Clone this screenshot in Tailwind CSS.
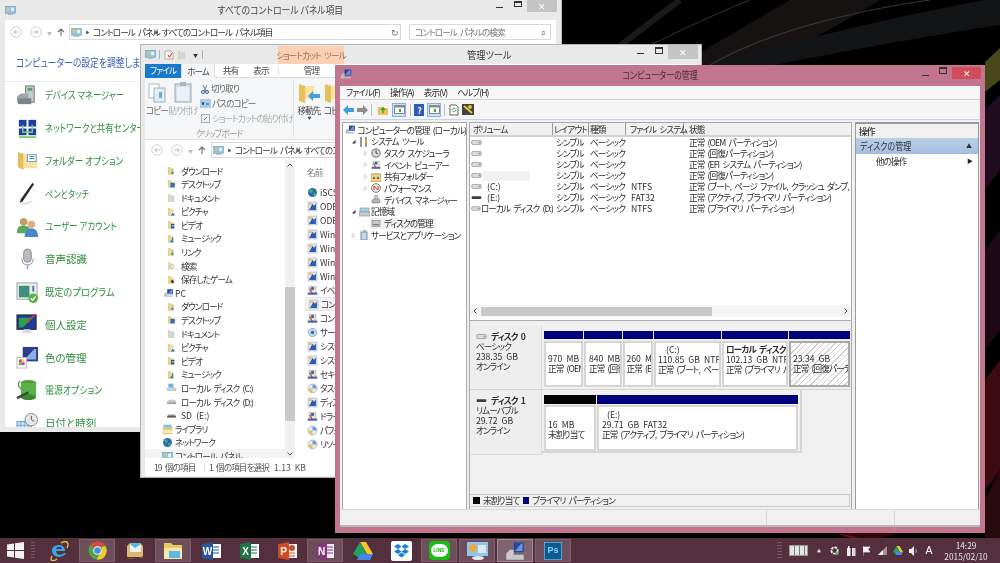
<!DOCTYPE html>
<html lang="ja">
<head>
<meta charset="utf-8">
<script src="https://cdn.jsdelivr.net/npm/@tailwindcss/browser@4"></script>
<title>Windows 8 desktop</title>
</head>
<body class="m-0 overflow-hidden bg-black">
<svg class="absolute w-0 h-0" aria-hidden="true">
  <symbol id="fdown" viewBox="0 0 16 16"><path d="M3 1h3l1 2h5v12H3z" fill="#f1d98a"/><path d="M3 1v14" stroke="#c3a553"/><path d="M10 5v5h3l-3.500 4L6 10h3V5z" fill="#2f8fd8"/></symbol>
  <symbol id="fdesk" viewBox="0 0 16 16"><path d="M3 1h3l1 2h5v12H3z" fill="#f1d98a"/><path d="M3 1v14" stroke="#c3a553"/><rect x="6" y="6" width="8" height="8" fill="#2a6fc0"/></symbol>
  <symbol id="fdoc" viewBox="0 0 16 16"><path d="M3 1h3l1 2h5v12H3z" fill="#e6dcc0"/><path d="M3 1v14" stroke="#b8a878"/><rect x="7" y="4" width="6" height="10" fill="#c9d3e6"/></symbol>
  <symbol id="fpic" viewBox="0 0 16 16"><path d="M3 1h3l1 2h5v12H3z" fill="#f1d98a"/><path d="M3 1v14" stroke="#c3a553"/><rect x="7" y="7" width="7" height="7" fill="#e8f0f8"/><path d="M7 14l3-5 4 5z" fill="#1d6bb8"/></symbol>
  <symbol id="fvid" viewBox="0 0 16 16"><path d="M3 1h3l1 2h5v12H3z" fill="#f1d98a"/><path d="M3 1v14" stroke="#c3a553"/><rect x="7" y="6" width="6" height="8" fill="#27508a"/><rect x="8" y="8" width="4" height="3" fill="#8fb4dd"/></symbol>
  <symbol id="fmus" viewBox="0 0 16 16"><path d="M3 1h3l1 2h5v12H3z" fill="#f1d98a"/><path d="M3 1v14" stroke="#c3a553"/><path d="M10 5v7" stroke="#2f8fd8" stroke-width="2"/><circle cx="8.500" cy="12" r="2.500" fill="#2f8fd8"/></symbol>
  <symbol id="fgame" viewBox="0 0 16 16"><path d="M3 1h3l1 2h5v12H3z" fill="#f1d98a"/><path d="M3 1v14" stroke="#c3a553"/><path d="M6 11l3-4 4 4-3 3z" fill="#3a3a3a"/></symbol>
  <symbol id="fsearch" viewBox="0 0 16 16"><path d="M3 1h3l1 2h5v12H3z" fill="#f1e3b2"/><path d="M3 1v14" stroke="#c3a553"/><circle cx="9" cy="9" r="3" fill="#fff" stroke="#9a9a9a"/></symbol>
  <symbol id="hdd" viewBox="0 0 16 16"><path d="M1 8l3-3h9l2 3v3H1z" fill="#cfd2d4" stroke="#8a8d90" stroke-width=".6"/><rect x="1.500" y="8.500" width="13" height="2.500" fill="#9ea3a6"/><rect x="11.500" y="9" width="2" height="1.200" fill="#58b848"/></symbol>
  <symbol id="hddc" viewBox="0 0 16 16"><path d="M3 1h8v6H3z" fill="#64b5e8"/><path d="M1 9l3-2h9l2 2v3H1z" fill="#cfd2d4" stroke="#8a8d90" stroke-width=".6"/></symbol>
  <symbol id="sd" viewBox="0 0 16 16"><path d="M1 9l3-2h9l2 2v2H1z" fill="#8f9294"/><rect x="1" y="10" width="14" height="2" fill="#3f4244"/></symbol>
  <symbol id="hddvol" viewBox="0 0 16 10"><rect x="1" y="2" width="14" height="6" rx="2" fill="#d8dadb" stroke="#75797c" stroke-width=".8"/><rect x="11" y="4" width="2.500" height="2" fill="#6ab84e"/></symbol>
  <symbol id="pc" viewBox="0 0 16 16"><rect x="6" y="2" width="9" height="8" fill="#24479f"/><path d="M7 9l5-6h2v6z" fill="#6f93d8"/><path d="M1 10l3-3h2v5h9l-1 2H1z" fill="#b8bbbf"/></symbol>
  <symbol id="lib" viewBox="0 0 16 16"><rect x="1" y="4" width="14" height="11" fill="#e7cd78"/><rect x="2" y="1" width="12" height="4" fill="#7bc6e8"/><rect x="1" y="9" width="14" height="4" fill="#f9ecb9"/></symbol>
  <symbol id="net" viewBox="0 0 16 16"><circle cx="8" cy="8" r="6.500" fill="#2769b8"/><path d="M4 4c3-2 5 0 4 3S3 9 4 4zM9 9c3-1 5 1 4 3s-4 2-4-3z" fill="#4fae4a"/></symbol>
  <symbol id="cp" viewBox="0 0 16 16"><rect x="1" y="2" width="14" height="10" fill="#8cc4e8" stroke="#5a86aa" stroke-width=".7"/><rect x="3" y="4" width="4" height="4" fill="#f0c24a"/><rect x="9" y="4" width="4" height="5" fill="#e8f3fa"/><path d="M5 12h6l1 2H4z" fill="#a8aeb3"/></symbol>
  <symbol id="tool" viewBox="0 0 16 16"><rect x="1.500" y="1.500" width="13" height="13" fill="#e5e7ea" stroke="#9ea8b4" stroke-width=".8"/><path d="M3 13l5-9 2 3 3-3v9z" fill="#2d5cb0"/><path d="M3 3h4v3H3z" fill="#f0c04c"/></symbol>
  <symbol id="tool2" viewBox="0 0 16 16"><circle cx="8" cy="8" r="6.500" fill="#e8edf3" stroke="#8b96a3" stroke-width=".8"/><path d="M8 8V2a6 6 0 0 1 6 6z" fill="#6f9ad8"/><path d="M8 8H2a6 6 0 0 0 6 6z" fill="#e7c15c"/></symbol>
  <symbol id="tool3" viewBox="0 0 16 16"><rect x="3" y="2" width="10" height="12" fill="#e8e3d6" stroke="#9b958a" stroke-width=".7"/><path d="M6 3h4v4H6z" fill="#2a5ea8"/><path d="M1 11h14v3H1z" fill="#3f6bb0"/><path d="M4 5l4 8" stroke="#c4392d" stroke-width="1.600"/></symbol>
  <symbol id="gear" viewBox="0 0 16 16"><circle cx="8" cy="8" r="6" fill="#c7dbec" stroke="#6b8fae"/><circle cx="8" cy="8" r="2.500" fill="#3c6fb2"/></symbol>
  <symbol id="back" viewBox="0 0 16 16"><circle cx="8" cy="8" r="7" fill="#fff" stroke="#c4c4c4"/><path d="M12 8H5m3-3L5 8l3 3" fill="none" stroke="#bcbcbc" stroke-width="1.300"/></symbol>
  <symbol id="fwd" viewBox="0 0 16 16"><circle cx="8" cy="8" r="7" fill="#fff" stroke="#c4c4c4"/><path d="M4 8h7M8 5l3 3-3 3" fill="none" stroke="#bcbcbc" stroke-width="1.300"/></symbol>
  <symbol id="up" viewBox="0 0 10 10"><path d="M5 9V2M2 5l3-3 3 3" fill="none" stroke="#6d6d6d" stroke-width="1.100"/></symbol>
  <symbol id="tri" viewBox="0 0 6 6"><path d="M1.500 .5L5 3 1.500 5.500z" fill="#444"/></symbol>
  <symbol id="otri" viewBox="0 0 6 6"><path d="M1.500 .5L5 3 1.500 5.500z" fill="#fff" stroke="#a9a9a9" stroke-width=".6"/></symbol>
  <symbol id="dtri" viewBox="0 0 6 6"><path d="M5.500 1L5.500 5.500 1 5.500z" fill="#444"/></symbol>
</svg>

<div class="relative w-[1000px] h-[563px] overflow-hidden bg-black text-[#333] text-[8.6px] tracking-[-0.9px] [word-spacing:2.2px] leading-none [font-family:'Noto_Sans_CJK_JP','Noto_Sans',sans-serif] [font-feature-settings:'palt'] blur-[0.25px]">

  <!-- wallpaper -->
  <svg class="absolute inset-0" width="1000" height="563" viewBox="0 0 1000 563" aria-hidden="true">
    <rect width="1000" height="563" fill="#000"/>
    <path d="M560 130C640 90 720 40 790 0h90C800 50 690 100 610 135z" fill="#161211"/>
    <path d="M700 65C780 45 900 15 985 0h15v25C900 40 800 60 760 68z" fill="#121416"/>
    <path d="M710 65C770 30 860 10 930 0" fill="none" stroke="#303436" stroke-width="1.200"/>
    <path d="M600 70C640 50 700 20 750 0" fill="none" stroke="#343130" stroke-width="1"/>
    <path d="M560 95C600 60 640 30 680 0" fill="none" stroke="#1b1919" stroke-width="6"/>
    <path d="M985 62L1000 48V80L985 92z" fill="#47471a"/>
    <path d="M985 110L1000 95V170L985 190z" fill="#1f0c1f"/>
    <path d="M985 250L1000 230V330L985 350z" fill="#1d0816"/>
    <path d="M985 380L1000 360V470L985 490z" fill="#3c0b12"/>
    <path d="M985 500L1000 470V540H985z" fill="#28090f"/>
    <path d="M835 533L870 538H850z" fill="#5d1010"/>
    <path d="M840 533h60l-20 5h-20z" fill="#300809"/>
  </svg>

  <!-- Control panel window -->
  <section class="absolute left-0 top-0 w-[562px] h-[432px] bg-[#e9e9e9] flex flex-col px-[5px] pb-[5px] border-r border-[#bdbdbd]">
    <header class="relative h-[20px] shrink-0 flex items-center justify-center text-[10px] tracking-normal [word-spacing:0] text-[#444]">
      <svg class="absolute left-0 top-[5px] w-[11px] h-[11px]"><use href="#cp"/></svg>
      <span class="pb-[1px] scale-x-[0.88] whitespace-nowrap">すべてのコントロール パネル項目</span>
      <div class="absolute right-[-1px] top-0 h-[14px] flex items-start">
        <div class="w-[7px] h-px bg-[#333] mt-[7px] mr-[11px]"></div>
        <div class="w-[8px] h-[6px] border border-[#333] border-t-2 mt-[1px] mr-[5px]"></div>
        <div class="w-[30px] h-[12px] bg-[#c4c4c4] text-white flex items-center justify-center text-[9px]">✕</div>
      </div>
    </header>
    <div class="flex-1 bg-white flex flex-col min-h-0 overflow-hidden">
      <div class="h-[24px] shrink-0 flex items-center pl-[5px] pr-[5px]">
        <svg class="w-[12px] h-[12px]"><use href="#back"/></svg>
        <svg class="w-[12px] h-[12px] ml-[8px]"><use href="#fwd"/></svg>
        <span class="ml-[5px] w-[6px] text-[#bbb] text-[5px]">▼</span>
        <svg class="ml-[3px] w-[10px] h-[10px]"><use href="#up"/></svg>
        <div class="ml-[3px] w-[332px] h-[16px] border border-[#d9d9d9] flex items-center pl-[1px]">
          <svg class="w-[11px] h-[11px]"><use href="#cp"/></svg>
          <svg class="ml-[3px] w-[5px] h-[5px]"><use href="#tri"/></svg>
          <span class="ml-[3px] w-[59px] whitespace-nowrap">コントロール パネル</span>
          <svg class="ml-[2px] w-[5px] h-[5px]"><use href="#tri"/></svg>
          <span class="ml-[3px] flex-1 whitespace-nowrap">すべてのコントロール パネル項目</span>
          <span class="mr-[2px] text-[9px] text-[#666]">↻</span>
        </div>
        <div class="ml-[8px] flex-1 h-[16px] border border-[#d9d9d9] flex items-center justify-between px-[5px] text-[#777]">
          <span>コントロール パネルの検索</span>
          <span class="text-[9px]">⌕</span>
        </div>
      </div>
      <div class="h-[26px] pl-[11px] pt-[13px] text-[11px] tracking-normal text-[#3c62b8] whitespace-nowrap shrink-0"><span class="inline-block origin-left scale-x-[0.8]">コンピューターの設定を調整します</span></div>
      <div class="h-[12px] border-b border-[#e6edf5] shrink-0 -mb-[3px]"></div>
      <ul class="flex flex-col text-[10.5px] tracking-normal [word-spacing:0] text-[#2f8f3f] *:h-[32.8px] *:flex *:items-center *:whitespace-nowrap">
        <li><svg class="ml-[11px] mr-[6px] w-[23px] h-[23px]" viewBox="0 0 24 24"><rect x="10" y="2" width="9" height="17" fill="#c6cacc" stroke="#777"/><rect x="12" y="4" width="5" height="3" fill="#4fa56f"/><path d="M1 13l4-3h8v9H1z" fill="#a2a6a9"/><rect x="2" y="15" width="14" height="6" fill="#7e8386"/></svg><span class="inline-block origin-left scale-x-[0.8]">デバイス マネージャー</span></li>
        <li><svg class="ml-[11px] mr-[6px] w-[23px] h-[23px]" viewBox="0 0 24 24"><rect x="3" y="3" width="8" height="7" fill="#1c3ea8"/><rect x="13" y="3" width="8" height="7" fill="#1c3ea8"/><rect x="3" y="12" width="8" height="7" fill="#1c3ea8"/><rect x="13" y="12" width="8" height="7" fill="#1c3ea8"/><path d="M7 8v8h10V8" fill="none" stroke="#7ccf6a" stroke-width="1.500"/><rect x="3" y="20" width="18" height="2" fill="#7ccf6a"/></svg><span class="inline-block origin-left scale-x-[0.8]">ネットワークと共有センター</span></li>
        <li><svg class="ml-[11px] mr-[6px] w-[23px] h-[23px]" viewBox="0 0 24 24"><path d="M2 3l6 2v17l-6-3z" fill="#e4bf5a"/><path d="M8 5h14v15H8z" fill="#f4e2a2"/><rect x="12" y="6" width="9" height="7" fill="#fff" stroke="#7a9cc0"/><path d="M14 8h5M14 10h5" stroke="#3c7fc0"/></svg><span class="inline-block origin-left scale-x-[0.82]">フォルダー オプション</span></li>
        <li><svg class="ml-[11px] mr-[6px] w-[23px] h-[23px]" viewBox="0 0 24 24"><path d="M17 1l2 1-12 18-3 2 1-4z" fill="#2b2b2b"/><path d="M5 23c5 0 8-1 12-3" stroke="#c7c7c7" fill="none"/></svg><span class="inline-block origin-left scale-x-[0.78]">ペンとタッチ</span></li>
        <li><svg class="ml-[11px] mr-[6px] w-[23px] h-[23px]" viewBox="0 0 24 24"><circle cx="8" cy="7" r="4" fill="#c89b6a"/><path d="M1 19c0-7 3-8 7-8s7 2 7 8z" fill="#5aa95a"/><circle cx="16" cy="10" r="4" fill="#d6b086"/><path d="M9 23c0-7 3-9 7-9s7 2 7 9z" fill="#4a86c6"/></svg><span class="inline-block origin-left scale-x-[0.8]">ユーザー アカウント</span></li>
        <li><svg class="ml-[11px] mr-[6px] w-[23px] h-[23px]" viewBox="0 0 24 24"><rect x="8" y="1" width="8" height="14" rx="4" fill="#b8bcc0" stroke="#8b8f93"/><path d="M6 11c0 9 12 9 12 0" fill="none" stroke="#9a9ea2" stroke-width="1.300"/><path d="M12 18v4" stroke="#9a9ea2" stroke-width="1.500"/></svg><span>音声認識</span></li>
        <li><svg class="ml-[11px] mr-[6px] w-[23px] h-[23px]" viewBox="0 0 24 24"><rect x="1" y="2" width="21" height="17" fill="#eceeee" stroke="#a0a0a0"/><rect x="3" y="5" width="11" height="12" fill="#3f8f7d"/><rect x="17" y="5" width="2" height="6" fill="#4878b0"/><circle cx="18" cy="18" r="5" fill="#5bb24a"/><path d="M15.500 18l2 2 3-4" stroke="#fff" fill="none" stroke-width="1.200"/></svg><span class="inline-block origin-left scale-x-[0.88]">既定のプログラム</span></li>
        <li><svg class="ml-[11px] mr-[6px] w-[23px] h-[23px]" viewBox="0 0 24 24"><rect x="1" y="2" width="20" height="15" fill="#1c3d9c" stroke="#222"/><path d="M3 5h15L7 15H3z" fill="#2f9f4a"/><path d="M12 10L20 1" stroke="#e0382f" stroke-width="1.500"/><path d="M8 17h7l2 4H6z" fill="#d9dcde"/></svg><span>個人設定</span></li>
        <li><svg class="ml-[11px] mr-[6px] w-[23px] h-[23px]" viewBox="0 0 24 24"><rect x="7" y="1" width="16" height="15" fill="#2c3c8e"/><path d="M9 14l10-11h2v11z" fill="#8fb0e4"/><rect x="1" y="12" width="10" height="11" fill="#fff" stroke="#bbb"/><rect x="3" y="14" width="3" height="3" fill="#e84040"/><rect x="6" y="14" width="3" height="3" fill="#e8d840"/><rect x="3" y="17" width="3" height="3" fill="#40c040"/><rect x="6" y="17" width="3" height="3" fill="#c040d0"/></svg><span>色の管理</span></li>
        <li><svg class="ml-[11px] mr-[6px] w-[23px] h-[23px]" viewBox="0 0 24 24"><ellipse cx="13" cy="4" rx="8" ry="3" fill="#4b9c3b"/><rect x="5" y="4" width="16" height="15" fill="#59b14a"/><ellipse cx="13" cy="19" rx="8" ry="3" fill="#3f8832"/><path d="M1 20l12-6" stroke="#444" stroke-width="2.500"/><path d="M4 2c-2 3-2 6 1 8" fill="none" stroke="#7d8a4a" stroke-width="1.400"/></svg><span class="inline-block origin-left scale-x-[0.85]">電源オプション</span></li>
        <li><svg class="ml-[11px] mr-[6px] w-[23px] h-[23px]" viewBox="0 0 24 24"><rect x="1" y="10" width="15" height="13" fill="#c5e0f4" stroke="#5f9ac8"/><path d="M1 14h15M1 18h15M5 10v13M9 10v13M13 10v13" stroke="#5f9ac8" stroke-width=".6"/><circle cx="16" cy="8" r="6.500" fill="#e7e7e7" stroke="#8a8a8a"/><path d="M16 4v4l3 2" stroke="#555" fill="none"/></svg><span>日付と時刻</span></li>
      </ul>
    </div>
  </section>

  <!-- Explorer window -->
  <section class="absolute left-[140px] top-[44px] w-[562px] h-[434px] bg-[#e9e9e9] border border-[#b5b5b5] flex flex-col px-[4px] pb-[1px]">
    <header class="relative h-[19px] shrink-0 flex items-center">
      <svg class="w-[11px] h-[11px]"><use href="#cp"/></svg>
      <span class="ml-[3px] w-px h-[9px] bg-[#b0b0b0]"></span>
      <svg class="ml-[4px] w-[10px] h-[10px]" viewBox="0 0 10 10"><path d="M1 1h6l2 2v6H1z" fill="#fff" stroke="#aaa"/><path d="M4 5l1.500 2L8 3" stroke="#e0642b" fill="none" stroke-width="1.300"/></svg>
      <svg class="ml-[3px] w-[10px] h-[10px]"><use href="#fdoc"/></svg>
      <span class="ml-[6px] text-[5px] text-[#333]">▼</span>
      <span class="ml-[5px] w-px h-[9px] bg-[#b0b0b0]"></span>
      <div class="absolute left-[133px] top-[1px] w-[66px] h-[18px] bg-[#fdd0b3] text-[#8c7263] flex items-center justify-center whitespace-nowrap">ショートカット ツール</div>
      <span class="absolute left-[199px] right-0 pr-[63px] flex justify-center text-[10px] tracking-normal text-[#333]"><span class="scale-x-[0.92]">管理ツール</span></span>
      <div class="absolute right-[-1px] top-0 h-[14px] flex items-start">
        <div class="w-[7px] h-px bg-[#333] mt-[8px] mr-[11px]"></div>
        <div class="w-[8px] h-[7px] border border-[#333] border-t-2 mt-[2px] mr-[5px]"></div>
        <div class="w-[30px] h-[14px] bg-[#c4c4c4] text-white flex items-center justify-center text-[9px]">✕</div>
      </div>
    </header>
    <div class="flex-1 bg-white flex flex-col min-h-0 overflow-hidden">
      <nav class="h-[14px] shrink-0 flex items-center border-b border-[#dcdcdc] text-[#444] relative">
        <span class="w-[36px] h-[15px] bg-[#1979ca] text-white flex items-center justify-center">ファイル</span>
        <span class="w-[34px] h-[15px] bg-[#f5f6f7] border-x border-t border-[#dcdcdc] flex items-center justify-center">ホーム</span>
        <span class="w-[31px] text-center">共有</span>
        <span class="w-[30px] text-center">表示</span>
        <span class="ml-[2px] w-[66px] text-center border-l border-[#e0e0e0]">管理</span>
      </nav>
      <div class="h-[62px] shrink-0 bg-[#f5f6f7] border-b border-[#e0e0e0] flex text-[#aaa] relative">
        <div class="w-[148px] flex flex-col">
          <div class="flex-1 flex min-h-0">
            <div class="w-[30px] flex flex-col items-center pt-[5px] text-[#6a6a6a]">
              <svg class="w-[18px] h-[20px]" viewBox="0 0 18 20"><rect x="1" y="1" width="10" height="14" fill="#fff" stroke="#b5b5b5"/><rect x="6" y="5" width="11" height="14" fill="#e4edf6" stroke="#9fb0c2"/><rect x="11" y="9" width="3" height="6" fill="#6fa8dc"/></svg>
              <span class="mt-[3px] whitespace-nowrap">コピー</span>
            </div>
            <div class="w-[28px] flex flex-col items-center pt-[3px]">
              <svg class="w-[18px] h-[22px]" viewBox="0 0 18 22"><rect x="1" y="3" width="16" height="18" fill="#d6e0ea" stroke="#9aa8b8"/><rect x="3" y="6" width="12" height="14" fill="#ebf0f5"/><rect x="6" y="1" width="6" height="4" fill="#aab5c2"/></svg>
              <span class="mt-[3px] whitespace-nowrap">貼り付け</span>
            </div>
            <div class="flex flex-col flex-1 pl-[3px] *:h-[15px] *:flex *:items-center *:whitespace-nowrap mt-[3px]">
              <div class="text-[#666]"><svg class="w-[10px] h-[10px] mr-[1px]" viewBox="0 0 10 10"><path d="M3 1l3 6M7 1L4 7" stroke="#6a7fa8" fill="none"/><circle cx="3" cy="8" r="1.500" fill="none" stroke="#2e5ea8"/><circle cx="7" cy="8" r="1.500" fill="none" stroke="#2e5ea8"/></svg>切り取り</div>
              <div class="text-[#666]"><svg class="w-[11px] h-[9px] mr-[1px]" viewBox="0 0 11 9"><rect width="11" height="9" fill="#a9cdea"/><path d="M2 3l1 3 1-3M6 5h3" stroke="#2b4e80" fill="none"/></svg>パスのコピー</div>
              <div class="text-[#aaa]"><svg class="w-[9px] h-[9px] mr-[2px] ml-[1px]" viewBox="0 0 9 9"><rect x=".5" y=".5" width="8" height="8" fill="#edf0f4" stroke="#a6b1be"/><path d="M3 6l3-3" stroke="#5b7eaa"/></svg>ショートカットの貼り付け</div>
            </div>
          </div>
          <div class="h-[12px] shrink-0 flex items-center justify-center text-[#999]">クリップボード</div>
        </div>
        <div class="w-px bg-[#e0e0e0] my-[2px]"></div>
        <div class="flex text-[#444] pl-[3px] pt-[5px]">
          <div class="flex flex-col items-center w-[24px]">
            <svg class="w-[23px] h-[20px]" viewBox="0 0 23 20"><path d="M1 1l6 2v17l-6-2z" fill="#e4bf5a"/><path d="M7 3h9v13H7z" fill="#f7e39e"/><path d="M22 11h-7V8l-5 5 5 5v-3h7z" fill="#3ea0e2"/></svg>
            <span class="mt-[3px] whitespace-nowrap">移動先</span>
            <span class="text-[4px] mt-[1px]">▼</span>
          </div>
          <div class="flex flex-col items-center w-[24px] ml-[2px]">
            <svg class="w-[23px] h-[20px]" viewBox="0 0 23 20"><path d="M1 1l6 2v17l-6-2z" fill="#e4bf5a"/><path d="M7 3h9v13H7z" fill="#f7e39e"/></svg>
            <span class="mt-[3px] whitespace-nowrap">コピー</span>
          </div>
        </div>
      </div>
      <div class="h-[20px] shrink-0 flex items-center pl-[6px]">
        <svg class="w-[12px] h-[12px]"><use href="#back"/></svg>
        <svg class="w-[12px] h-[12px] ml-[8px]"><use href="#fwd"/></svg>
        <span class="ml-[5px] w-[6px] text-[#bbb] text-[5px]">▼</span>
        <svg class="ml-[3px] w-[10px] h-[10px]"><use href="#up"/></svg>
        <div class="ml-[4px] flex-1 h-[16px] border border-[#d9d9d9] flex items-center pl-[1px] whitespace-nowrap">
          <svg class="w-[11px] h-[11px]"><use href="#cp"/></svg>
          <svg class="ml-[3px] w-[5px] h-[5px]"><use href="#tri"/></svg>
          <span class="ml-[3px] w-[59px]">コントロール パネル</span>
          <svg class="ml-[2px] w-[5px] h-[5px]"><use href="#tri"/></svg>
          <span class="ml-[3px]">すべてのコントロール パネル項目</span>
        </div>
      </div>
      <div class="flex-1 flex min-h-0">
        <div class="w-[140px] shrink-0 relative pt-[4px] overflow-hidden text-[#333] *:h-[13.6px] *:flex *:items-center *:whitespace-nowrap">
          <div class="pl-[22px]"><svg class="w-[9px] h-[10px] mr-[5px]"><use href="#fdown"/></svg>ダウンロード</div>
          <div class="pl-[22px]"><svg class="w-[9px] h-[10px] mr-[5px]"><use href="#fdesk"/></svg>デスクトップ</div>
          <div class="pl-[22px]"><svg class="w-[9px] h-[10px] mr-[5px]"><use href="#fdoc"/></svg>ドキュメント</div>
          <div class="pl-[22px]"><svg class="w-[9px] h-[10px] mr-[5px]"><use href="#fpic"/></svg>ピクチャ</div>
          <div class="pl-[22px]"><svg class="w-[9px] h-[10px] mr-[5px]"><use href="#fvid"/></svg>ビデオ</div>
          <div class="pl-[22px]"><svg class="w-[9px] h-[10px] mr-[5px]"><use href="#fmus"/></svg>ミュージック</div>
          <div class="pl-[22px]"><svg class="w-[9px] h-[10px] mr-[5px]"><use href="#fdown"/></svg>リンク</div>
          <div class="pl-[22px]"><svg class="w-[9px] h-[10px] mr-[5px]"><use href="#fsearch"/></svg>検索</div>
          <div class="pl-[22px]"><svg class="w-[9px] h-[10px] mr-[5px]"><use href="#fgame"/></svg>保存したゲーム</div>
          <div class="pl-[18px] tracking-normal"><svg class="w-[11px] h-[10px] mr-[1px]"><use href="#pc"/></svg>PC</div>
          <div class="pl-[22px]"><svg class="w-[9px] h-[10px] mr-[5px]"><use href="#fdown"/></svg>ダウンロード</div>
          <div class="pl-[22px]"><svg class="w-[9px] h-[10px] mr-[5px]"><use href="#fdesk"/></svg>デスクトップ</div>
          <div class="pl-[22px]"><svg class="w-[9px] h-[10px] mr-[5px]"><use href="#fdoc"/></svg>ドキュメント</div>
          <div class="pl-[22px]"><svg class="w-[9px] h-[10px] mr-[5px]"><use href="#fpic"/></svg>ピクチャ</div>
          <div class="pl-[22px]"><svg class="w-[9px] h-[10px] mr-[5px]"><use href="#fvid"/></svg>ビデオ</div>
          <div class="pl-[22px]"><svg class="w-[9px] h-[10px] mr-[5px]"><use href="#fmus"/></svg>ミュージック</div>
          <div class="pl-[21px]"><svg class="w-[11px] h-[10px] mr-[4px]"><use href="#hddc"/></svg>ローカル ディスク (C:)</div>
          <div class="pl-[21px]"><svg class="w-[11px] h-[10px] mr-[4px]"><use href="#hdd"/></svg>ローカル ディスク (D:)</div>
          <div class="pl-[21px] tracking-normal"><svg class="w-[11px] h-[10px] mr-[4px]"><use href="#sd"/></svg>SD (E:)</div>
          <div class="pl-[17px]"><svg class="w-[11px] h-[11px] mr-[2px]"><use href="#lib"/></svg>ライブラリ</div>
          <div class="pl-[17px]"><svg class="w-[11px] h-[11px] mr-[2px]"><use href="#net"/></svg>ネットワーク</div>
          <div class="pl-[17px] bg-[#f3f3f3]"><svg class="w-[11px] h-[11px] mr-[2px]"><use href="#cp"/></svg>コントロール パネル</div>
        </div>
        <div class="w-[10px] shrink-0 bg-[#f0f0f0] flex flex-col items-center justify-between relative py-[2px]">
          <svg class="w-[6px] h-[4px] mt-[1px]" viewBox="0 0 6 4"><path d="M.5 3.500L3 1l2.500 2.500" fill="none" stroke="#555"/></svg>
          <div class="absolute left-0 right-0 top-[127px] h-[134px] bg-[#c9c9c9]"></div>
          <svg class="w-[6px] h-[4px]" viewBox="0 0 6 4"><path d="M.5.5L3 3 5.500.5" fill="none" stroke="#555"/></svg>
        </div>
        <div class="flex-1 pl-[12px] min-w-0 overflow-hidden">
          <div class="h-[25px] flex items-center text-[#777] pb-[1px]">名前</div>
          <div class="-ml-[2px] *:h-[14px] *:flex *:items-center *:pl-[2px] *:whitespace-nowrap">
            <div class="tracking-normal"><svg class="w-[11px] h-[11px] mr-[2px]"><use href="#net"/></svg>iSCSI</div>
            <div class="tracking-normal"><svg class="w-[11px] h-[11px] mr-[2px]"><use href="#tool"/></svg>ODBC</div>
            <div class="tracking-normal"><svg class="w-[11px] h-[11px] mr-[2px]"><use href="#tool"/></svg>ODBC</div>
            <div class="tracking-normal"><svg class="w-[11px] h-[11px] mr-[2px]"><use href="#tool"/></svg>Windows</div>
            <div class="tracking-normal"><svg class="w-[11px] h-[11px] mr-[2px]"><use href="#tool"/></svg>Windows</div>
            <div class="tracking-normal"><svg class="w-[11px] h-[11px] mr-[2px]"><use href="#tool"/></svg>Windows</div>
            <div class="tracking-normal"><svg class="w-[11px] h-[11px] mr-[2px]"><use href="#tool"/></svg>Windows</div>
            <div><svg class="w-[11px] h-[11px] mr-[2px]"><use href="#tool3"/></svg>イベント</div>
            <div class="bg-[#f4f4f4] border border-[#e3e3e3]"><svg class="w-[11px] h-[11px] mr-[2px]"><use href="#tool"/></svg>コンピューター</div>
            <div><svg class="w-[11px] h-[11px] mr-[2px]"><use href="#tool3"/></svg>コンポーネント</div>
            <div><svg class="w-[11px] h-[11px] mr-[2px]"><use href="#gear"/></svg>サービス</div>
            <div><svg class="w-[11px] h-[11px] mr-[2px]"><use href="#tool"/></svg>システム</div>
            <div><svg class="w-[11px] h-[11px] mr-[2px]"><use href="#tool"/></svg>システム</div>
            <div><svg class="w-[11px] h-[11px] mr-[2px]"><use href="#tool3"/></svg>セキュリティ</div>
            <div><svg class="w-[11px] h-[11px] mr-[2px]"><use href="#tool2"/></svg>タスク</div>
            <div><svg class="w-[11px] h-[11px] mr-[2px]"><use href="#tool"/></svg>ディスク</div>
            <div><svg class="w-[11px] h-[11px] mr-[2px]"><use href="#tool3"/></svg>ドライブ</div>
            <div><svg class="w-[11px] h-[11px] mr-[2px]"><use href="#tool2"/></svg>パフォーマンス</div>
            <div><svg class="w-[11px] h-[11px] mr-[2px]"><use href="#tool2"/></svg>リソース</div>
          </div>
        </div>
      </div>
      <footer class="h-[18px] shrink-0 flex items-center text-[#555] whitespace-nowrap">
        <span class="w-[60px] pl-[9px] border-r border-[#e3e3e3]">19 個の項目</span>
        <span class="pl-[4px] w-[69px]">1 個の項目を選択</span>
        <span class="tracking-normal">1.13 KB</span>
      </footer>
    </div>
  </section>

  <!-- Computer management window -->
  <section class="absolute left-[335px] top-[65px] w-[650px] h-[468px] bg-[#c1758f] flex flex-col px-[5px] pb-[6px] text-[#2b2b2b]">
    <header class="relative h-[21px] shrink-0 flex items-center justify-center text-[10px] tracking-normal text-[#4b2a36]">
      <svg class="absolute left-0 top-[3px] w-[12px] h-[12px]"><use href="#pc"/></svg>
      <span class="pb-[2px] scale-x-[0.8] whitespace-nowrap">コンピューターの管理</span>
      <div class="absolute right-[-1px] top-[2px] h-[14px] flex items-start">
        <div class="w-[7px] h-px bg-[#333] mt-[8px] mr-[10px]"></div>
        <div class="w-[8px] h-[7px] border border-[#333] border-t-2 mr-[5px]"></div>
        <div class="w-[29px] h-[12px] bg-[#d24b5a] text-white flex items-center justify-center text-[9px]">✕</div>
      </div>
    </header>
    <div class="flex-1 bg-[#f0f0f0] flex flex-col min-h-0">
      <div class="h-[14px] shrink-0 bg-[#f7f7f8] border-b border-[#d0d0d0] flex items-center gap-[10px] pl-[6px] whitespace-nowrap">
        <span>ファイル(F)</span><span>操作(A)</span><span>表示(V)</span><span>ヘルプ(H)</span>
      </div>
      <div class="h-[20px] shrink-0 bg-[#f5f5f6] flex items-center pl-[3px] border-b border-[#c3d5e8]">
        <svg class="w-[11px] h-[10px]" viewBox="0 0 11 10"><path d="M0 5l5-5v3h6v4H5v3z" fill="#3e9fe0"/></svg>
        <svg class="ml-[3px] w-[11px] h-[10px]" viewBox="0 0 11 10"><path d="M11 5L6 0v3H0v4h6v3z" fill="#8d8d8d"/></svg>
        <span class="ml-[3px] w-px h-[12px] bg-[#bbb]"></span>
        <svg class="ml-[5px] w-[12px] h-[12px]" viewBox="0 0 12 12"><path d="M1 3h4l1 1h5v7H1z" fill="#e6c35c"/><path d="M6 9V4L4 6M6 4l2 2" stroke="#2b9c36" fill="none" stroke-width="1.200"/></svg>
        <div class="ml-[3px] w-[14px] h-[14px] bg-[#cde4f7] border border-[#7eb4ea] flex items-center justify-center"><svg class="w-[11px] h-[9px]" viewBox="0 0 11 9"><rect x=".5" y=".5" width="10" height="8" fill="#fff" stroke="#888"/><rect x=".5" y=".5" width="10" height="2" fill="#8a8a8a"/><rect x="5" y="4" width="2" height="3" fill="#3fa447"/></svg></div>
        <span class="ml-[4px] w-px h-[12px] bg-[#bbb]"></span>
        <svg class="ml-[3px] w-[10px] h-[12px]" viewBox="0 0 10 12"><rect width="10" height="12" fill="#2d5cc0"/><text x="5" y="9.500" font-size="9" text-anchor="middle" fill="#fff" font-weight="700">?</text></svg>
        <div class="ml-[3px] w-[14px] h-[14px] bg-[#cde4f7] border border-[#7eb4ea] flex items-center justify-center"><svg class="w-[11px] h-[9px]" viewBox="0 0 11 9"><rect x=".5" y=".5" width="10" height="8" fill="#fff" stroke="#888"/><rect x=".5" y=".5" width="10" height="2" fill="#8a8a8a"/><rect x="5" y="4" width="2" height="3" fill="#3fa447"/></svg></div>
        <span class="ml-[3px] w-px h-[12px] bg-[#bbb]"></span>
        <svg class="ml-[4px] w-[10px] h-[12px]" viewBox="0 0 10 12"><path d="M1 1h6l2 2v8H1z" fill="#fff" stroke="#666"/><path d="M3 6a2 2 0 0 1 3.500-1M7 6a2 2 0 0 1-3.500 1" stroke="#2e9c3f" fill="none"/></svg>
        <svg class="ml-[3px] w-[12px] h-[11px]" viewBox="0 0 12 11"><rect width="12" height="11" fill="#444"/><path d="M2 2l8 7" stroke="#e0c83c" stroke-width="2"/><circle cx="8" cy="3" r="2" fill="#d9c43a"/></svg>
      </div>
      <div class="flex-1 flex min-h-0 pt-[2px] pl-[2px]">
        <!-- tree -->
        <div class="w-[125px] shrink-0 bg-white border border-[#a9a9a9] border-b-0 pt-[1px] *:h-[11.7px] *:flex *:items-center *:whitespace-nowrap">
          <div class="pl-[2px]"><svg class="w-[11px] h-[11px] mr-[2px]"><use href="#pc"/></svg>コンピューターの管理 (ローカル)</div>
          <div class="pl-[8px]"><svg class="w-[5px] h-[5px] mr-[3px]"><use href="#dtri"/></svg><svg class="w-[9px] h-[10px] mr-[2px]" viewBox="0 0 9 10"><path d="M2 0v10M7 0v10" stroke="#8c8c8c" stroke-width="1.800"/><path d="M7 3v3" stroke="#e0a52a" stroke-width="2"/></svg><span class="ml-[1px]">システム ツール</span></div>
          <div class="pl-[20px]"><svg class="w-[5px] h-[5px] mr-[3px]"><use href="#otri"/></svg><svg class="w-[10px] h-[10px] mr-[3px]" viewBox="0 0 10 10"><circle cx="5" cy="5" r="4.200" fill="#d9dce0" stroke="#666"/><path d="M5 2v3l2 1" stroke="#444" fill="none"/></svg>タスク スケジューラ</div>
          <div class="pl-[20px]"><svg class="w-[5px] h-[5px] mr-[3px]"><use href="#otri"/></svg><svg class="w-[10px] h-[10px] mr-[3px]"><use href="#tool3"/></svg>イベント ビューアー</div>
          <div class="pl-[20px]"><svg class="w-[5px] h-[5px] mr-[3px]"><use href="#otri"/></svg><svg class="w-[10px] h-[10px] mr-[3px]" viewBox="0 0 10 10"><rect y="2" width="10" height="8" fill="#efd889" stroke="#b89b45"/><circle cx="3" cy="6" r="1.200" fill="#5070a0"/><circle cx="7" cy="6" r="1.200" fill="#a05030"/></svg>共有フォルダー</div>
          <div class="pl-[20px]"><svg class="w-[5px] h-[5px] mr-[3px]"><use href="#otri"/></svg><svg class="w-[10px] h-[10px] mr-[3px]" viewBox="0 0 10 10"><circle cx="5" cy="5" r="4.300" fill="#f4f4f4" stroke="#777"/><path d="M3 7V3l4 4V3" stroke="#d3322c" fill="none"/></svg>パフォーマンス</div>
          <div class="pl-[28px]"><svg class="w-[10px] h-[9px] mr-[3px]" viewBox="0 0 16 16"><path d="M1 9l4-3h8l2 3v5H1z" fill="#b0b4b7" stroke="#777"/><rect x="6" y="1" width="5" height="6" fill="#d4d7d9" stroke="#777"/></svg>デバイス マネージャー</div>
          <div class="pl-[8px]"><svg class="w-[5px] h-[5px] mr-[3px]"><use href="#dtri"/></svg><svg class="w-[11px] h-[10px] mr-[1px]" viewBox="0 0 11 10"><rect x="1" y="1" width="9" height="4" fill="#a9cfe6" stroke="#7c97a8" stroke-width=".6"/><rect y="5" width="11" height="4" fill="#c8ccce" stroke="#868a8d" stroke-width=".6"/></svg>記憶域</div>
          <div class="pl-[27px]"><div class="flex items-center bg-[#f0f0f0] w-[66px] h-full pl-px"><svg class="w-[10px] h-[9px] mr-[3px]" viewBox="0 0 16 16"><rect x="1" y="3" width="14" height="10" fill="#c8cbcd" stroke="#6f7376"/><rect x="3" y="9" width="10" height="2" fill="#6f7376"/></svg>ディスクの管理</div></div>
          <div class="pl-[8px]"><svg class="w-[5px] h-[5px] mr-[3px]"><use href="#otri"/></svg><svg class="w-[10px] h-[10px] mr-[2px]" viewBox="0 0 10 10"><rect x="2" y="2" width="6" height="8" fill="#c4d7e6" stroke="#7390a8"/><rect x="4" y="0" width="3" height="3" fill="#8fb5d3"/></svg>サービスとアプリケーション</div>
        </div>
        <!-- center -->
        <div class="w-[383px] shrink-0 ml-[2px] flex flex-col min-h-0">
          <div class="h-[199px] shrink-0 bg-white border border-[#a9a9a9] flex flex-col relative">
            <div class="h-[14px] shrink-0 bg-[#f0f0f0] border-b-2 border-[#d0d0d0] grid grid-cols-[83px_36px_37px_58px_1fr] *:border-r *:border-[#9c9c9c] *:pl-[1px] *:flex *:items-center *:whitespace-nowrap">
              <span class="pl-[3px]!">ボリューム</span><span>レイアウト</span><span>種類</span><span class="pl-[4px]!">ファイル システム</span><span class="pl-[5px]! border-r-0!">状態</span>
            </div>
            <div class="flex-1 flex flex-col *:h-[11px] *:grid *:grid-cols-[83px_36px_37px_58px_1fr] *:items-center *:whitespace-nowrap">
              <div><span class="pl-[1px] flex items-center"><svg class="w-[11px] h-[7px]"><use href="#hddvol"/></svg></span><span class="pl-[3px]">シンプル</span><span class="pl-[1px]">ベーシック</span><span></span><span class="pl-[5px]">正常 (OEM パーティション)</span></div>
              <div><span class="pl-[1px] flex items-center"><svg class="w-[11px] h-[7px]"><use href="#hddvol"/></svg></span><span class="pl-[3px]">シンプル</span><span class="pl-[1px]">ベーシック</span><span></span><span class="pl-[5px]">正常 (回復パーティション)</span></div>
              <div><span class="pl-[1px] flex items-center"><svg class="w-[11px] h-[7px]"><use href="#hddvol"/></svg></span><span class="pl-[3px]">シンプル</span><span class="pl-[1px]">ベーシック</span><span></span><span class="pl-[5px]">正常 (EFI システム パーティション)</span></div>
              <div><span class="pl-[1px] flex items-center"><svg class="w-[11px] h-[7px]"><use href="#hddvol"/></svg><span class="ml-[1px] w-[46px] h-[10px] bg-[#f1f1f1]"></span></span><span class="pl-[3px]">シンプル</span><span class="pl-[1px]">ベーシック</span><span></span><span class="pl-[5px]">正常 (回復パーティション)</span></div>
              <div><span class="pl-[1px] flex items-center tracking-normal"><svg class="w-[11px] h-[7px] mr-[5px]"><use href="#hddvol"/></svg>(C:)</span><span class="pl-[3px]">シンプル</span><span class="pl-[1px]">ベーシック</span><span class="pl-[5px] tracking-normal">NTFS</span><span class="pl-[5px] overflow-hidden">正常 (ブート, ページ ファイル, クラッシュ ダンプ, プライマリ パーティション)</span></div>
              <div><span class="pl-[1px] flex items-center tracking-normal"><svg class="w-[11px] h-[7px] mr-[5px]" viewBox="0 0 16 10"><rect x="1" y="3" width="14" height="4" rx="1" fill="#3c3e40"/></svg>(E:)</span><span class="pl-[3px]">シンプル</span><span class="pl-[1px]">ベーシック</span><span class="pl-[5px] tracking-normal">FAT32</span><span class="pl-[5px]">正常 (アクティブ, プライマリ パーティション)</span></div>
              <div><span class="pl-[1px] flex items-center"><svg class="w-[11px] h-[7px]"><use href="#hddvol"/></svg>ローカル ディスク (D:)</span><span class="pl-[3px]">シンプル</span><span class="pl-[1px]">ベーシック</span><span class="pl-[5px] tracking-normal">NTFS</span><span class="pl-[5px]">正常 (プライマリ パーティション)</span></div>
            </div>
            <div class="h-[12px] shrink-0 bg-[#f5f5f5] flex items-center justify-between px-[3px] mb-[3px]">
              <svg class="w-[4px] h-[6px]" viewBox="0 0 4 6"><path d="M3.500.5L1 3l2.500 2.500" fill="none" stroke="#444"/></svg>
              <div class="absolute left-[11px] w-[231px] h-[9px] bg-[#c9c9c9]"></div>
              <svg class="w-[4px] h-[6px]" viewBox="0 0 4 6"><path d="M.5.5L3 3 .5 5.500" fill="none" stroke="#444"/></svg>
            </div>
          </div>
          <div class="flex-1 flex flex-col min-h-0 bg-[#f0f0f0] border-x border-[#a9a9a9] pr-[1px] relative pt-[5px]">
            <div class="h-[64px] shrink-0 flex border-b border-[#d4d4d4]">
              <div class="w-[72px] shrink-0 bg-[#eeeeee] border-r border-[#dcdcdc] pl-[6px] pt-[6px] flex flex-col gap-[1px] whitespace-nowrap">
                <div class="flex items-center font-bold"><svg class="w-[11px] h-[7px] mr-[4px]"><use href="#hddvol"/></svg>ディスク 0</div>
                <div class="h-[9px]">ベーシック</div><div class="h-[9px] tracking-normal">238.35 GB</div><div class="h-[9px]">オンライン</div>
              </div>
              <div class="flex-1 flex gap-[1px] pl-[2px] pt-[5px] min-w-0 *:flex *:flex-col *:gap-[2px] *:whitespace-nowrap">
                <div class="w-[39px]"><div class="h-[8px] bg-[#00007f]"></div><div class="h-[46px] bg-white border-2 border-[#d5d5d5] pl-[2px] pt-[10px] leading-[10px] overflow-hidden"><span class="tracking-normal">970 MB</span><br>正常 (OEM パーティション)</div></div>
                <div class="w-[37.500px]"><div class="h-[8px] bg-[#00007f]"></div><div class="h-[46px] bg-white border-2 border-[#d5d5d5] pl-[3px] pt-[10px] leading-[10px] overflow-hidden"><span class="tracking-normal">840 MB</span><br>正常 (回復パーティション)</div></div>
                <div class="w-[30.500px]"><div class="h-[8px] bg-[#00007f]"></div><div class="h-[46px] bg-white border-2 border-[#d5d5d5] pl-[2px] pt-[10px] leading-[10px] overflow-hidden"><span class="tracking-normal">260 MB</span><br>正常 (EFI システム)</div></div>
                <div class="w-[67px]"><div class="h-[8px] bg-[#00007f]"></div><div class="h-[46px] bg-white border-2 border-[#d5d5d5] pl-[2px] pt-[1px] leading-[10px] overflow-hidden"><span class="pl-[8px] tracking-normal">(C:)</span><br><span class="tracking-normal">110.85 GB NTFS</span><br>正常 (ブート, ページ)</div></div>
                <div class="w-[66px]"><div class="h-[8px] bg-[#00007f]"></div><div class="h-[46px] bg-white border-2 border-[#d5d5d5] pl-[2px] pt-[1px] leading-[10px] overflow-hidden"><b>ローカル ディスク</b><br><span class="tracking-normal">102.13 GB NTFS</span><br>正常 (プライマリ パーティション)</div></div>
                <div class="w-[60.500px]"><div class="h-[8px] bg-[#00007f]"></div><div class="h-[46px] bg-[repeating-linear-gradient(135deg,#fff,#fff_3px,#cfcfcf_3px,#cfcfcf_4px)] border-2 border-[#a8a8a8] pl-[2px] pt-[10px] leading-[10px] overflow-hidden"><span class="tracking-normal">23.34 GB</span><br>正常 (回復パーティション)</div></div>
              </div>
            </div>
            <div class="h-[65px] shrink-0 flex">
              <div class="w-[72px] shrink-0 bg-[#eeeeee] border-r border-b border-[#dcdcdc] pl-[6px] pt-[6px] flex flex-col gap-[1px] whitespace-nowrap">
                <div class="flex items-center font-bold"><svg class="w-[11px] h-[7px] mr-[4px]" viewBox="0 0 16 10"><rect x="1" y="3" width="14" height="4" rx="1" fill="#3c3e40"/></svg>ディスク 1</div>
                <div class="h-[9px]">リムーバブル</div><div class="h-[9px] tracking-normal">29.72 GB</div><div class="h-[9px]">オンライン</div>
              </div>
              <div class="flex gap-[1px] pl-[2px] pr-[2px] pt-[5px] h-[63px] *:flex *:flex-col *:gap-[1px] *:whitespace-nowrap border-r-2 border-b-2 border-[#d5d5d5]">
                <div class="w-[52px]"><div class="h-[9px] bg-black"></div><div class="h-[47px] bg-white border-2 border-[#d5d5d5] pl-[2px] pt-[12px] leading-[10px] overflow-hidden"><span class="tracking-normal">16 MB</span><br>未割り当て</div></div>
                <div class="w-[201px]"><div class="h-[9px] bg-[#00007f]"></div><div class="h-[47px] bg-white border-2 border-[#d5d5d5] pl-[3px] pt-[2px] leading-[10px] overflow-hidden"><span class="pl-[5px] tracking-normal">(E:)</span><br><span class="tracking-normal">29.71 GB FAT32</span><br>正常 (アクティブ, プライマリ パーティション)</div></div>
              </div>
            </div>
            <div class="flex-1"></div>
            <div class="h-[13px] shrink-0 bg-[#f0f0f0] border-t border-b border-[#c9c9c9] border-r flex items-center pl-[3px] whitespace-nowrap">
              <span class="w-[7px] h-[7px] bg-black mr-[3px]"></span>未割り当て
              <span class="w-[6px] h-[7px] bg-[#00007f] ml-[4px] mr-[3px]"></span>プライマリ パーティション
            </div>
            <div class="h-[2px] shrink-0"></div>
          </div>
        </div>
        <!-- actions -->
        <div class="w-[124px] shrink-0 ml-[3px] bg-white border-x border-[#9a9a9a] border-t-2 flex flex-col">
          <div class="h-[14px] bg-[#f0f0f0] pl-[3px] flex items-center font-medium">操作</div>
          <div class="h-[16px] bg-gradient-to-b from-[#b9cfe7] to-[#a4bedc] flex items-center justify-between pl-[4px] pr-[6px] text-[10px] tracking-normal text-[#333]"><span class="inline-block origin-left scale-x-[0.8] whitespace-nowrap">ディスクの管理</span><span class="text-[6px]">▲</span></div>
          <div class="h-[14px] flex items-center justify-between pl-[20px] pr-[6px]"><span>他の操作</span><span class="text-[6px] text-[#222]">▶</span></div>
        </div>
      </div>
      <footer class="h-[18px] shrink-0 bg-[#f0f0f0] border-t border-[#dadada] border-b-2 border-b-[#b7b7b7] flex">
        <div class="w-[427px] border-r border-[#d6d6d6]"></div>
        <div class="w-[128px] border-r border-[#d6d6d6]"></div>
      </footer>
    </div>
  </section>

  <!-- Taskbar -->
  <footer class="absolute left-0 bottom-0 w-[1000px] h-[25px] bg-[#54303f] flex items-center text-white tracking-normal [word-spacing:0]">
    <svg class="ml-[7px] w-[17px] h-[17px]" viewBox="0 0 17 17"><path d="M0 2.500l7-1v6.500H0zM8 1.300L17 0v8H8zM0 9h7v6.500l-7-1zM8 9h9v8l-9-1.300z" fill="#f3f0f1"/></svg>
    <div class="ml-[7px] w-[4px] h-[18px] bg-[repeating-linear-gradient(#7a5a68,#7a5a68_1.500px,transparent_1.500px,transparent_3px)]"></div>
    <div class="ml-[6px] flex gap-[2px] h-[23px] *:w-[36px] *:h-[23px] *:flex *:items-center *:justify-center">
      <div><svg class="w-[20px] h-[20px]" viewBox="0 0 20 20"><path d="M10 4c4 0 6 3 6 6H7c0 4 5 5 8 2h2c-2 5-13 6-14-2 0-4 3-6 7-6zm3 4c-1-3-5-3-6 0z" fill="#39a4e8"/><path d="M3 15C0 20 4 21 8 18M12 2c5-3 9-1 6 5" fill="none" stroke="#f2c73a" stroke-width="1.300"/></svg></div>
      <div class="bg-white/15 border border-white/10"><svg class="w-[19px] h-[19px]" viewBox="0 0 20 20"><circle cx="10" cy="10" r="9.500" fill="#4aa647"/><path d="M10 .5a9.500 9.500 0 0 1 8.500 5H10a4.500 4.500 0 0 0-4 2.500L2.500 4A9.500 9.500 0 0 1 10 .5z" fill="#d94a3c"/><path d="M18.500 5.500A9.500 9.500 0 0 1 9 19.500l4-7a4.500 4.500 0 0 0 1-6z" fill="#f6c82e"/><circle cx="10" cy="10" r="4.500" fill="#fff"/><circle cx="10" cy="10" r="3.500" fill="#4a8be8"/></svg></div>
      <div><svg class="w-[20px] h-[19px]" viewBox="0 0 20 19"><path d="M2 5l3-3h10l3 3v11H2z" fill="#dcb76c"/><rect x="5" y="2" width="11" height="9" fill="#5bb6de"/><path d="M5 3l5 4 6-4v8H5z" fill="#e8f3f8"/><path d="M2 17c5 2 11 0 16-2v2H2z" fill="#8d5d2e"/></svg></div>
      <div class="bg-white/15 border border-white/10"><svg class="w-[20px] h-[19px]" viewBox="0 0 20 19"><path d="M1 2h7l2 2h9v14H1z" fill="#e9c868"/><path d="M1 7h18v11H1z" fill="#f9e7a8"/><rect x="6" y="10" width="11" height="7" fill="#5cb7e8"/></svg></div>
      <div><svg class="w-[19px] h-[18px]" viewBox="0 0 19 18"><rect x="9" y="2" width="10" height="14" fill="#fff"/><path d="M11 5h6M11 8h6M11 11h6" stroke="#2a5699" stroke-width="1.200"/><path d="M0 2l11-2v18L0 16z" fill="#2a5699"/><text x="5.500" y="12.500" font-size="10" font-weight="700" fill="#fff" text-anchor="middle" font-family="Liberation Sans">W</text></svg></div>
      <div><svg class="w-[19px] h-[18px]" viewBox="0 0 19 18"><rect x="9" y="2" width="10" height="14" fill="#fff"/><path d="M11 5h6M11 8h6M11 11h6" stroke="#207347" stroke-width="1.200"/><path d="M0 2l11-2v18L0 16z" fill="#207347"/><text x="5.500" y="12.500" font-size="10" font-weight="700" fill="#fff" text-anchor="middle" font-family="Liberation Sans">X</text></svg></div>
      <div><svg class="w-[19px] h-[18px]" viewBox="0 0 19 18"><rect x="9" y="2" width="10" height="14" fill="#fff"/><path d="M11 11h6M11 14h6" stroke="#d04a25" stroke-width="1.200"/><circle cx="14" cy="6" r="3" fill="#d04a25"/><path d="M0 2l11-2v18L0 16z" fill="#d04a25"/><text x="5.500" y="12.500" font-size="10" font-weight="700" fill="#fff" text-anchor="middle" font-family="Liberation Sans">P</text></svg></div>
      <div class="bg-white/15 border border-white/10"><svg class="w-[19px] h-[18px]" viewBox="0 0 19 18"><rect x="8" y="2" width="10" height="14" fill="#f2e9f5"/><path d="M11 5h6M11 8h6M11 11h6" stroke="#80397b" stroke-width="1.200"/><path d="M0 2l11-2v18L0 16z" fill="#80397b"/><text x="5.500" y="12.500" font-size="10" font-weight="700" fill="#fff" text-anchor="middle" font-family="Liberation Sans">N</text></svg></div>
      <div><svg class="w-[20px] h-[18px]" viewBox="0 0 20 18"><path d="M7 0h6l7 12h-6z" fill="#f7c52c"/><path d="M7 0l6.500 12-3.500 6L0 12z" fill="#1ea362"/><path d="M4 18l3-6h13l-3 6z" fill="#4a86e8"/></svg></div>
      <div><div class="w-[21px] h-[20px] bg-white rounded-[2px] flex items-center justify-center"><svg class="w-[15px] h-[14px]" viewBox="0 0 15 14"><path d="M4 0L0 2.500 4 5l3.500-2.500zM11 0L7.500 2.500 11 5l4-2.500zM0 7.500L4 10l3.500-2.500L4 5zM11 5L7.500 7.500 11 10l4-2.500zM4 11l3.500 2.500L11 11 7.500 8.500z" fill="#1a7fdc"/></svg></div></div>
      <div class="bg-white/15 border border-white/10"><div class="w-[21px] h-[19px] bg-[#18bf12] rounded-[4px] flex items-center justify-center"><div class="w-[17px] h-[13px] bg-white rounded-full text-[#18bf12] text-[5px] font-bold flex items-center justify-center [font-family:'Liberation_Sans',sans-serif]">LINE</div></div></div>
      <div class="bg-white/15 border border-white/10"><svg class="w-[21px] h-[19px]" viewBox="0 0 21 19"><rect y="1" width="21" height="14" fill="#8fc6ec"/><circle cx="6" cy="7" r="4" fill="#e8a94a"/><path d="M11 4h8v8h-8z" fill="#dceaf4"/><ellipse cx="11" cy="17" rx="6" ry="2" fill="#e8e8e8"/></svg></div>
      <div class="bg-white/25 border border-white/25"><svg class="w-[22px] h-[20px]" viewBox="0 0 16 16"><rect x="7" y="1" width="8" height="8" fill="#24479f"/><path d="M8 8l5-6h1v6z" fill="#6f93d8"/><path d="M1 10l3-3h3v4h8v4H1z" fill="#c6c9cc"/></svg></div>
      <div class="bg-white/15 border border-white/10"><div class="w-[18px] h-[18px] bg-[#0f5a8c] border border-[#4ea3d6] text-[#8fd0f5] text-[9px] font-bold flex items-center justify-center [font-family:'Liberation_Sans',sans-serif]">Ps</div></div>
    </div>
    <div class="ml-[206px] w-[5px] h-[18px] bg-[repeating-linear-gradient(#7a5a68,#7a5a68_1.500px,transparent_1.500px,transparent_3px)]"></div>
    <div class="ml-[7px] w-[19px] h-[11px] border border-[#999] bg-[repeating-linear-gradient(90deg,#e4e4e4,#e4e4e4_2px,#777_2px,#777_2.500px)]"></div>
    <span class="ml-[9px] w-[5px] text-[4px]">▲</span>
    <svg class="ml-[8px] w-[9px] h-[9px]" viewBox="0 0 10 10"><circle cx="5" cy="5" r="3.500" fill="none" stroke="#fff" stroke-width="2" stroke-dasharray="3 1"/><circle cx="8" cy="8" r="2" fill="#4fc35a"/></svg>
    <svg class="ml-[8px] w-[9px] h-[10px]" viewBox="0 0 9 10"><rect y="2" width="3.500" height="8" fill="#eee"/><rect x="5" y="2" width="3.500" height="8" fill="#ddd"/><rect x="1" width="1.500" height="2" fill="#eee"/></svg>
    <svg class="ml-[7px] w-[8px] h-[10px]" viewBox="0 0 8 10"><path d="M0 0v10M0 1h7L5 3.500 7 6H0" fill="#eee" stroke="#eee" stroke-width=".7"/></svg>
    <svg class="ml-[7px] w-[9px] h-[9px]" viewBox="0 0 9 9"><path d="M0 9l9-9v9z" fill="#a49097"/><path d="M0 9l5-5v5z" fill="#f0f0f0"/></svg>
    <svg class="ml-[6px] w-[10px] h-[9px]" viewBox="0 0 20 18"><path d="M7 0h6l7 12h-6z" fill="#f7c52c"/><path d="M7 0l6.500 12-3.500 6L0 12z" fill="#1ea362"/><path d="M4 18l3-6h13l-3 6z" fill="#4a86e8"/></svg>
    <svg class="ml-[6px] w-[9px] h-[10px]" viewBox="0 0 9 10"><path d="M0 3h2l3-3v10L2 7H0z" fill="#eee"/><path d="M6.500 3c1 1 1 3 0 4" stroke="#aaa" fill="none"/></svg>
    <span class="ml-[7px] w-[8px] text-[10.500px] text-center [font-family:'Liberation_Sans',sans-serif]">A</span>
    <div class="ml-[9px] w-[48px] flex flex-col items-center gap-[2px] text-[8.300px] text-[#e8e2e4]">
      <span>14:29</span><span>2015/02/10</span>
    </div>
  </footer>
</div>
</body>
</html>
